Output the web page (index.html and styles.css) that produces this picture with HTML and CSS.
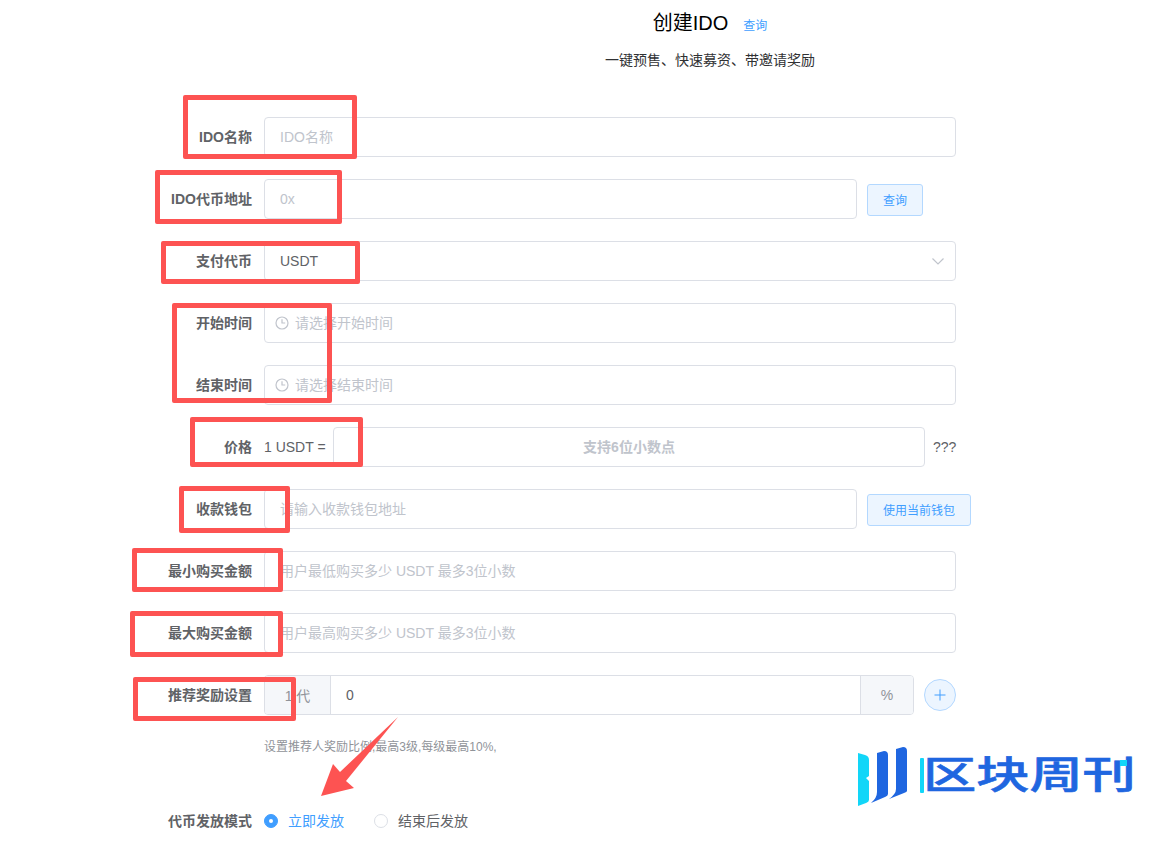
FILE: index.html
```html
<!DOCTYPE html>
<html lang="zh-CN">
<head>
<meta charset="utf-8">
<title>创建IDO</title>
<link rel="stylesheet" href="styles.css">
</head>
<body>
<main class="page">
  <header class="head">
    <div class="title-line"><h1 class="title">创建IDO</h1><a class="title-link">查询</a></div>
    <p class="subtitle">一键预售、快速募资、带邀请奖励</p>
  </header>

  <form class="form">
    <div class="row"><label class="label">IDO名称</label><div class="field"><input class="input" placeholder="IDO名称"></div></div>

    <div class="row"><label class="label">IDO代币地址</label>
      <div class="field"><input class="input input-short" placeholder="0x"><button type="button" class="btn btn-query">查询</button></div></div>

    <div class="row"><label class="label">支付代币</label>
      <div class="field"><div class="input select"><span>USDT</span>
        <svg class="chevron" viewBox="0 0 14 14"><path d="M1.5 4.5 7 10l5.5-5.5"/></svg></div></div></div>

    <div class="row"><label class="label">开始时间</label>
      <div class="field"><div class="input date">
        <svg class="clock" viewBox="0 0 14 14"><circle cx="7" cy="7" r="6"/><path d="M7 3.2V7h3.2"/></svg><span class="ph">请选择开始时间</span></div></div></div>

    <div class="row"><label class="label">结束时间</label>
      <div class="field"><div class="input date">
        <svg class="clock" viewBox="0 0 14 14"><circle cx="7" cy="7" r="6"/><path d="M7 3.2V7h3.2"/></svg><span class="ph">请选择结束时间</span></div></div></div>

    <div class="row"><label class="label">价格</label>
      <div class="field"><span class="prefix">1 USDT =</span><input class="input input-price" placeholder="支持6位小数点"><span class="suffix">???</span></div></div>

    <div class="row"><label class="label">收款钱包</label>
      <div class="field"><input class="input input-short" placeholder="请输入收款钱包地址"><button type="button" class="btn btn-wallet">使用当前钱包</button></div></div>

    <div class="row"><label class="label">最小购买金额</label><div class="field"><input class="input" placeholder="用户最低购买多少 USDT 最多3位小数"></div></div>

    <div class="row"><label class="label">最大购买金额</label><div class="field"><input class="input" placeholder="用户最高购买多少 USDT 最多3位小数"></div></div>

    <div class="row"><label class="label">推荐奖励设置</label>
      <div class="field">
        <div class="group">
          <span class="addon addon-left">1 代</span>
          <span class="group-value">0</span>
          <span class="addon addon-right">%</span>
        </div>
        <button type="button" class="plus" aria-label="添加"><svg viewBox="0 0 12 12"><path d="M6 .5v11M.5 6h11"/></svg></button>
      </div></div>

    <p class="help">设置推荐人奖励比例,最高3级,每级最高10%,</p>

    <div class="row"><label class="label">代币发放模式</label>
      <div class="field radios">
        <span class="radio radio-on"><i class="dot"></i>立即发放</span>
        <span class="radio"><i class="dot"></i>结束后发放</span>
      </div></div>
  </form>

  <div class="mark mark-1"></div>
  <div class="mark mark-2"></div>
  <div class="mark mark-3"></div>
  <div class="mark mark-4"></div>
  <div class="mark mark-5"></div>
  <div class="mark mark-6"></div>
  <div class="mark mark-7"></div>
  <div class="mark mark-8"></div>
  <div class="mark mark-9"></div>

  <svg class="arrow" viewBox="0 0 90 90"><polygon points="78,1 26,65 34,72 1,80 13,48 20,56"/></svg>

  <div class="logo">
    <svg class="logo-mark" viewBox="0 0 52 62">
      <path class="c1" d="M0 8 7 10Q11 11 11 15V31L8 33 11 36V55Q11 57 8 58L0 61Z"/>
      <path class="c2" d="M19 8 26 6Q30 6 30 10V49Q30 51 27 52L13 58Q19 53 19 47Z"/>
      <path class="c2" d="M38 4 45 2Q49 2 49 6V46Q49 47 46 48L31 54Q38 49 38 44Z"/>
    </svg>
    <i class="logo-bar"></i>
    <span class="logo-text">区块周刊</span>
    <i class="logo-dot"></i>
  </div>
</main>
</body>
</html>
```

FILE: styles.css
```css
* { box-sizing: border-box; }
html, body { margin: 0; padding: 0; background: #fff; }
body {
  font-family: "Liberation Sans", "Noto Sans CJK SC", sans-serif;
  font-size: 14px;
  color: #606266;
}
.page { position: relative; width: 1161px; height: 850px; overflow: hidden; }

.head { margin-left: 264px; width: 892px; padding-top: 12px; text-align: center; }
.title-line { display: flex; justify-content: center; align-items: baseline; gap: 15px; height: 22px; }
.title { margin: 0; font-size: 20px; line-height: 22px; font-weight: 400; color: #000; }
.title-link { font-size: 12px; color: #409eff; }
.subtitle { margin: 16px 0 0; font-size: 14px; line-height: 20px; color: #303133; }

.form { margin: 47px 0 0 144px; width: 830px; }
.row { display: flex; align-items: center; height: 40px; margin-bottom: 22px; }
.label { width: 120px; padding: 0 12px 2px 0; text-align: right; font-weight: 700; color: #606266; flex: none; }
.field { display: flex; align-items: center; width: 692px; flex: none; }

.input {
  display: flex; align-items: center;
  width: 100%; height: 40px; padding: 0 15px;
  border: 1px solid #dcdfe6; border-radius: 4px; background: #fff;
  font: inherit; color: #606266; outline: none;
}
.input::placeholder, .ph { color: #c0c4cc; opacity: 1; }
.input-short { width: 593px; flex: none; }
.select { justify-content: space-between; padding-right: 10px; }
.chevron { width: 14px; height: 14px; fill: none; stroke: #c0c4cc; stroke-width: 1.2; }
.date { padding-left: 10px; gap: 6px; }
.ph { padding-bottom: 2px; }
.clock { width: 14px; height: 14px; fill: none; stroke: #c0c4cc; stroke-width: 1.2; flex: none; }

.prefix { width: 69px; flex: none; white-space: nowrap; }
.input-price { width: 592px; flex: none; text-align: center; }
.input-price::placeholder { font-weight: 700; }
.suffix { margin-left: 8px; white-space: nowrap; }

.btn {
  height: 32px; margin: 2px 0 0 10px; padding: 0 0 2px; flex: none;
  border: 1px solid #b3d8ff; border-radius: 3px; background: #ecf5ff;
  font: inherit; font-size: 12px; color: #409eff;
}
.btn-query { width: 56px; }
.btn-wallet { width: 104px; }

.group {
  display: flex; align-items: stretch; width: 650px; height: 40px; flex: none;
  border: 1px solid #dcdfe6; border-radius: 4px; overflow: hidden;
}
.addon { background: #f5f7fa; color: #909399; display: flex; align-items: center; justify-content: center; flex: none; }
.addon-left { width: 66px; border-right: 1px solid #dcdfe6; }
.addon-right { width: 53px; border-left: 1px solid #dcdfe6; }
.group-value { flex: 1; padding-left: 15px; line-height: 38px; }
.plus {
  width: 32px; height: 32px; margin-left: 10px; padding: 0; flex: none;
  border: 1px solid #b3d8ff; border-radius: 50%; background: #ecf5ff;
  display: flex; align-items: center; justify-content: center;
}
.plus svg { width: 12px; height: 12px; fill: none; stroke: #409eff; stroke-width: 1; }

.help { margin: 0 0 45px 120px; padding-top: 1px; font-size: 12px; line-height: 18px; color: #909399; }

.radios { gap: 30px; }
.radio { display: flex; align-items: center; gap: 10px; padding-bottom: 2px; color: #606266; }
.dot { width: 14px; height: 14px; margin-top: 2px; border: 1px solid #dcdfe6; border-radius: 50%; background: #fff; position: relative; flex: none; }
.radio-on { color: #409eff; }
.radio-on .dot { background: #409eff; border-color: #409eff; }
.radio-on .dot::after {
  content: ""; position: absolute; left: 4px; top: 4px;
  width: 4px; height: 4px; border-radius: 50%; background: #fff;
}

.mark { position: absolute; border: 5px solid #fd5352; border-radius: 2px; }
.mark-1 { left: 183px; top: 95px; width: 174px; height: 64px; }
.mark-2 { left: 155px; top: 170px; width: 187px; height: 54px; }
.mark-3 { left: 161px; top: 241px; width: 199px; height: 43px; }
.mark-4 { left: 172px; top: 303px; width: 160px; height: 100px; }
.mark-5 { left: 190px; top: 417px; width: 173px; height: 50px; }
.mark-6 { left: 179px; top: 486px; width: 111px; height: 47px; }
.mark-7 { left: 132px; top: 548px; width: 151px; height: 44px; }
.mark-8 { left: 130px; top: 611px; width: 153px; height: 46px; }
.mark-9 { left: 133px; top: 677px; width: 163px; height: 44px; }

.arrow { position: absolute; left: 320px; top: 716px; width: 90px; height: 90px; fill: #fd5352; }

.logo { position: absolute; left: 858px; top: 745px; width: 280px; height: 62px; }
.logo-mark { position: absolute; left: 0; top: 0; width: 52px; height: 62px; }
.c1 { fill: #12d6f8; }
.c2 { fill: #1f66e0; }
.logo-bar { position: absolute; left: 62px; top: 13px; width: 4px; height: 35px; background: #12d6f8; border-radius: 1px; }
.logo-text {
  position: absolute; left: 65px; top: 4px;
  font-family: "Noto Sans CJK SC", sans-serif; font-size: 38px; line-height: 46px; font-weight: 500;
  -webkit-text-stroke: 0.6px #1f66e0;
  color: #1f66e0; white-space: nowrap;
  transform: scaleX(1.4); transform-origin: left center;
}
.logo-dot { position: absolute; left: 262px; top: 15px; width: 7px; height: 6px; background: #12d6f8; }
```
